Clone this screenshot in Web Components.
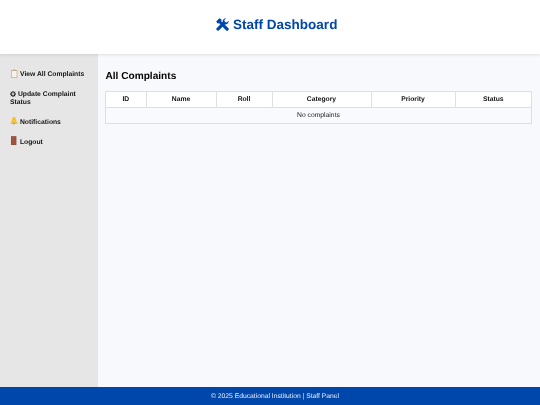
<!DOCTYPE html>
<html>
<head>
<meta charset="utf-8">
<title>Staff Dashboard</title>
<style>
  html, body { margin: 0; height: 100%; }
  body { font-family: "Liberation Sans", Arial, sans-serif; color: #000; overflow: hidden; text-rendering: geometricPrecision; background: #f8f9fd; }
  #app { display: flex; flex-direction: column; height: 405px; width: 540px; filter: blur(.25px); }
  #middle { display: flex; flex: 1; min-height: 0; }
</style>
</head>
<body>
<div id="app">
  <staff-header>Staff Dashboard</staff-header>
  <div id="middle">
    <staff-sidebar>
      <nav-item icon="clipboard">View All Complaints</nav-item>
      <nav-item icon="gear">Update Complaint Status</nav-item>
      <nav-item icon="bell">Notifications</nav-item>
      <nav-item icon="door">Logout</nav-item>
    </staff-sidebar>
    <complaints-panel heading="All Complaints"></complaints-panel>
  </div>
  <staff-footer>© 2025 Educational Institution | Staff Panel</staff-footer>
</div>

<script>
const ICONS = {
  clipboard: `<svg width="8" height="9" viewBox="0 0 8 9"><rect x="1" y="1" width="6.4" height="7.8" fill="#d2ad8c"/><rect x="1.8" y="2" width="4.8" height="6" fill="#f6f3ec"/><rect x="2.9" y="0.5" width="2.6" height="1.4" fill="#b0aca4"/></svg>`,
  bell: `<svg width="8" height="9" viewBox="0 0 9 9"><path d="M4.5 0.4C3 0.4 2.3 1.6 2.2 3.2C2.1 5 1.4 6 0.6 7H8.4C7.6 6 6.9 5 6.8 3.2C6.7 1.6 6 0.4 4.5 0.4Z" fill="#f5c33b"/><path d="M0.6 7H8.4L8.2 7.9H0.8Z" fill="#d99a22"/><circle cx="4.5" cy="8.2" r="0.8" fill="#b9771a"/></svg>`,
  door: `<svg width="8" height="9" viewBox="0 0 8 9"><rect x="1" y="0.2" width="5.4" height="8.8" fill="#8a4a38"/><rect x="1.6" y="0.8" width="4.2" height="7.6" fill="#a5533f"/></svg>`,
  gear: `<svg width="6" height="6" viewBox="0 0 7 7" style="margin-top:-5.5px"><circle cx="3.5" cy="3.5" r="2.3" fill="none" stroke="#222" stroke-width="1.3"/><circle cx="3.5" cy="3.5" r="0.6" fill="#222"/><path d="M3.5 0V1M3.5 6V7M0 3.5H1M6 3.5H7M1 1L1.7 1.7M5.3 5.3L6 6M6 1L5.3 1.7M1.7 5.3L1 6" stroke="#222" stroke-width="1"/></svg>`
};

class StaffHeader extends HTMLElement {
  constructor() {
    super();
    this.attachShadow({mode: 'open'}).innerHTML = `<style>
      :host { display: flex; align-items: center; justify-content: center; gap: 4px; height: 49px; padding: 0 0 5px 13.5px; flex: none;
        background: #fff; box-shadow: 0 1px 3px rgba(0,0,0,.1); position: relative; z-index: 1;
        color: #0047ab; font-size: 13.5px; font-weight: 700; }
      svg { display: block; }
    </style>
    <svg width="13" height="13" viewBox="0 0 13 13" fill="#0047ab">
      <path d="M0.8 9.9L7 3.7 9.3 6 3.1 12.2C2.5 12.8 1.4 12.8 .8 12.2 .2 11.6 .2 10.5 .8 9.9Z"/>
      <path d="M12.8 2.8A3.6 3.6 0 0 1 8.4 6.4L6.6 4.6A3.6 3.6 0 0 1 10.2.2L8.3 2.1 8.9 4 10.8 4.6Z"/>
      <path d="M.2 3.4L3.4.2 5.6 1.6 5.2 3.2 12.2 9.9C13 10.7 13 11.4 12.3 12.2 11.5 13 10.7 13 9.9 12.2L3.2 5.2 1.6 5.6Z"/>
    </svg><slot></slot>`;
  }
}

class StaffSidebar extends HTMLElement {
  constructor() {
    super();
    this.attachShadow({mode: 'open'}).innerHTML = `<style>
      :host { display: flex; flex-direction: column; gap: 12.25px; width: 88px; flex: none; padding: 17px 0 0 10px;
        background: #e6e6e6; box-shadow: 1px 0 2px rgba(0,0,0,.06); }
    </style><slot></slot>`;
  }
}

class NavItem extends HTMLElement {
  constructor() {
    super();
    this.attachShadow({mode: 'open'}).innerHTML = `<style>
      :host { display: block; font-size: 6.75px; font-weight: 700; line-height: 7.75px; color: #111; padding-right: 8px; }
      span { display: inline-block; height: 0; vertical-align: baseline; margin-right: 2px; }
      svg { display: block; margin-top: -7.5px; }
    </style><span id="ic"></span><slot></slot>`;
  }
  connectedCallback() {
    this.shadowRoot.getElementById('ic').innerHTML = ICONS[this.getAttribute('icon')] || '';
  }
}

class ComplaintsPanel extends HTMLElement {
  constructor() {
    super();
    this.attachShadow({mode: 'open'}).innerHTML = `<style>
      :host { display: block; flex: 1; min-width: 0; padding: 15px 8px 0 7px; background: #f8f9fd; }
      h2 { margin: 0 0 8px .5px; font-size: 10.125px; line-height: 13px; padding-top: 1px; font-weight: 700; color: #000; }
      table { border-collapse: collapse; width: 426px; table-layout: fixed; font-size: 6.75px; }
      th, td { border: 0.75px solid #dcdfe3; text-align: center; padding: 0; height: 15px; }
      th { color: #111; font-weight: 700; background: #fff; }
      td { color: #222; background: #f9fafd; }
    </style>
    <h2 id="t"></h2>
    <table>
      <colgroup>
        <col style="width:40.5px"><col style="width:70px"><col style="width:56px">
        <col style="width:99px"><col style="width:84px"><col style="width:76.5px">
      </colgroup>
      <thead><tr><th>ID</th><th>Name</th><th>Roll</th><th>Category</th><th>Priority</th><th>Status</th></tr></thead>
      <tbody><tr><td colspan="6">No complaints</td></tr></tbody>
    </table>`;
  }
  connectedCallback() {
    this.shadowRoot.getElementById('t').textContent = this.getAttribute('heading');
  }
}

class StaffFooter extends HTMLElement {
  constructor() {
    super();
    this.attachShadow({mode: 'open'}).innerHTML = `<style>
      :host { display: flex; align-items: center; justify-content: center; height: 18px; padding-left: 10px; flex: none;
        background: #0047ab; color: #e8eef8; font-size: 6.75px; }
    </style><slot></slot>`;
  }
}

customElements.define('staff-header', StaffHeader);
customElements.define('staff-sidebar', StaffSidebar);
customElements.define('nav-item', NavItem);
customElements.define('complaints-panel', ComplaintsPanel);
customElements.define('staff-footer', StaffFooter);
</script>
</body>
</html>
